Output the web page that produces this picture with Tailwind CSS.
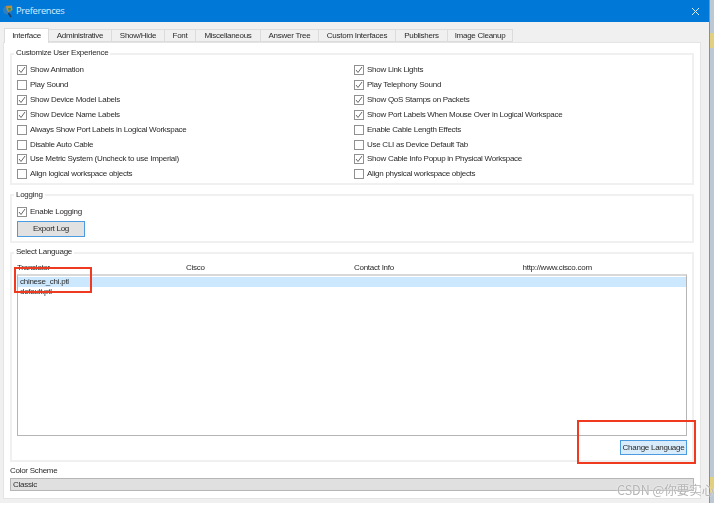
<!DOCTYPE html>
<html lang="en">
<head>
    <meta charset="UTF-8">
    <title>Preferences</title>
    <script src="https://cdn.jsdelivr.net/npm/@tailwindcss/browser@4"></script>
</head>
<body class="relative w-[714px] h-[505px] overflow-hidden bg-white font-['Liberation_Sans',sans-serif] text-[8px] tracking-[-0.27px] leading-none text-[#2a2a2a]">

  <div class="relative w-[714px] h-[505px] blur-[0.3px]">
    <div class="flex h-[503px]">
      <div class="w-[710px] h-[503px] bg-[#f0f0f0] border-r border-[#5b9bd5] flex flex-col">
        <!-- title bar -->
        <div class="h-[22px] bg-[#0078d7] flex items-center pl-[2px] pr-[8px] shrink-0">
            <svg width="12" height="14" viewBox="0 0 12 14">
                <circle cx="5.5" cy="6" r="4.5" fill="#2f7fc0"/>
                <path d="M4 2 L10 1.5 L10.5 6 L6 8 L4.5 5 Z" fill="#b98f3c"/>
                <path d="M6 4 L9 4 L8.5 6.5 L6.5 6.5 Z" fill="#3f8a4e"/>
                <path d="M6.5 9 L9 13" stroke="#1f3d5c" stroke-width="1.6"/>
            </svg>
            <span class="ml-[2px] text-[#d7ecff] text-[9.4px] tracking-[-0.35px] font-['Open_Sans',sans-serif]">Preferences</span>
            <svg class="ml-auto mr-[1px]" width="9" height="9" viewBox="0 0 9 9">
                <path d="M1 1 L8 8 M8 1 L1 8" stroke="#dcefff" stroke-width="1"/>
            </svg>
        </div>

        <div class="pl-[3px] pr-[8px] pt-[7px]">
            <!-- tabs -->
            <div class="flex h-[13px] items-stretch text-center whitespace-nowrap">
                <div class="w-[45px] ml-px -mt-px bg-white h-[15px] flex items-center justify-center border-t border-x border-[#dcdcdc] relative">Interface</div>
                <div class="w-[63px] border-y border-r border-[#dcdcdc] flex items-center justify-center">Administrative</div>
                <div class="w-[53px] border-y border-r border-[#dcdcdc] flex items-center justify-center">Show/Hide</div>
                <div class="w-[31px] border-y border-r border-[#dcdcdc] flex items-center justify-center">Font</div>
                <div class="w-[65px] border-y border-r border-[#dcdcdc] flex items-center justify-center">Miscellaneous</div>
                <div class="w-[58px] border-y border-r border-[#dcdcdc] flex items-center justify-center">Answer Tree</div>
                <div class="w-[77px] border-y border-r border-[#dcdcdc] flex items-center justify-center">Custom Interfaces</div>
                <div class="w-[52px] border-y border-r border-[#dcdcdc] flex items-center justify-center">Publishers</div>
                <div class="w-[65px] border-y border-r border-[#dcdcdc] flex items-center justify-center">Image Cleanup</div>
            </div>

            <!-- tab page -->
            <div class="h-[457px] bg-white border border-[#e4e4e4] px-[6px] pt-[10px] flex flex-col">

                <!-- customize group -->
                <div class="relative h-[132px] border-2 border-[#f0f0f0] pt-[8px] pl-[5px] grid grid-cols-[337px_1fr] auto-rows-[14.85px] shrink-0">
                    <span class="absolute left-[2px] top-[-6px] bg-white px-[2px]">Customize User Experience</span>

                    <label class="flex items-center"><svg class="mr-[3px]" width="10" height="10" viewBox="0 0 10 10"><rect x=".5" y=".5" width="9" height="9" fill="#fff" stroke="#909090"/><path d="M2 5 L4 7.5 L8 2" fill="none" stroke="#666"/></svg>Show Animation</label>
                    <label class="flex items-center"><svg class="mr-[3px]" width="10" height="10" viewBox="0 0 10 10"><rect x=".5" y=".5" width="9" height="9" fill="#fff" stroke="#909090"/><path d="M2 5 L4 7.5 L8 2" fill="none" stroke="#666"/></svg>Show Link Lights</label>

                    <label class="flex items-center"><svg class="mr-[3px]" width="10" height="10" viewBox="0 0 10 10"><rect x=".5" y=".5" width="9" height="9" fill="#fff" stroke="#909090"/></svg>Play Sound</label>
                    <label class="flex items-center"><svg class="mr-[3px]" width="10" height="10" viewBox="0 0 10 10"><rect x=".5" y=".5" width="9" height="9" fill="#fff" stroke="#909090"/><path d="M2 5 L4 7.5 L8 2" fill="none" stroke="#666"/></svg>Play Telephony Sound</label>

                    <label class="flex items-center"><svg class="mr-[3px]" width="10" height="10" viewBox="0 0 10 10"><rect x=".5" y=".5" width="9" height="9" fill="#fff" stroke="#909090"/><path d="M2 5 L4 7.5 L8 2" fill="none" stroke="#666"/></svg>Show Device Model Labels</label>
                    <label class="flex items-center"><svg class="mr-[3px]" width="10" height="10" viewBox="0 0 10 10"><rect x=".5" y=".5" width="9" height="9" fill="#fff" stroke="#909090"/><path d="M2 5 L4 7.5 L8 2" fill="none" stroke="#666"/></svg>Show QoS Stamps on Packets</label>

                    <label class="flex items-center"><svg class="mr-[3px]" width="10" height="10" viewBox="0 0 10 10"><rect x=".5" y=".5" width="9" height="9" fill="#fff" stroke="#909090"/><path d="M2 5 L4 7.5 L8 2" fill="none" stroke="#666"/></svg>Show Device Name Labels</label>
                    <label class="flex items-center"><svg class="mr-[3px]" width="10" height="10" viewBox="0 0 10 10"><rect x=".5" y=".5" width="9" height="9" fill="#fff" stroke="#909090"/><path d="M2 5 L4 7.5 L8 2" fill="none" stroke="#666"/></svg>Show Port Labels When Mouse Over in Logical Workspace</label>

                    <label class="flex items-center"><svg class="mr-[3px]" width="10" height="10" viewBox="0 0 10 10"><rect x=".5" y=".5" width="9" height="9" fill="#fff" stroke="#909090"/></svg>Always Show Port Labels in Logical Workspace</label>
                    <label class="flex items-center"><svg class="mr-[3px]" width="10" height="10" viewBox="0 0 10 10"><rect x=".5" y=".5" width="9" height="9" fill="#fff" stroke="#909090"/></svg>Enable Cable Length Effects</label>

                    <label class="flex items-center"><svg class="mr-[3px]" width="10" height="10" viewBox="0 0 10 10"><rect x=".5" y=".5" width="9" height="9" fill="#fff" stroke="#909090"/></svg>Disable Auto Cable</label>
                    <label class="flex items-center"><svg class="mr-[3px]" width="10" height="10" viewBox="0 0 10 10"><rect x=".5" y=".5" width="9" height="9" fill="#fff" stroke="#909090"/></svg>Use CLI as Device Default Tab</label>

                    <label class="flex items-center"><svg class="mr-[3px]" width="10" height="10" viewBox="0 0 10 10"><rect x=".5" y=".5" width="9" height="9" fill="#fff" stroke="#909090"/><path d="M2 5 L4 7.5 L8 2" fill="none" stroke="#666"/></svg>Use Metric System (Uncheck to use Imperial)</label>
                    <label class="flex items-center"><svg class="mr-[3px]" width="10" height="10" viewBox="0 0 10 10"><rect x=".5" y=".5" width="9" height="9" fill="#fff" stroke="#909090"/><path d="M2 5 L4 7.5 L8 2" fill="none" stroke="#666"/></svg>Show Cable Info Popup in Physical Workspace</label>

                    <label class="flex items-center"><svg class="mr-[3px]" width="10" height="10" viewBox="0 0 10 10"><rect x=".5" y=".5" width="9" height="9" fill="#fff" stroke="#909090"/></svg>Align logical workspace objects</label>
                    <label class="flex items-center"><svg class="mr-[3px]" width="10" height="10" viewBox="0 0 10 10"><rect x=".5" y=".5" width="9" height="9" fill="#fff" stroke="#909090"/></svg>Align physical workspace objects</label>
                </div>

                <!-- logging group -->
                <div class="relative h-[49px] mt-[9px] border-2 border-[#f0f0f0] pt-[11px] pl-[5px] shrink-0">
                    <span class="absolute left-[2px] top-[-5px] bg-white px-[2px]">Logging</span>
                    <label class="flex items-center"><svg class="mr-[3px]" width="10" height="10" viewBox="0 0 10 10"><rect x=".5" y=".5" width="9" height="9" fill="#fff" stroke="#909090"/><path d="M2 5 L4 7.5 L8 2" fill="none" stroke="#666"/></svg>Enable Logging</label>
                    <button class="block mt-[4px] w-[68px] h-[16px] bg-[#e1e1e1] border border-[#4a9be0] text-center">Export Log</button>
                </div>

                <!-- language group -->
                <div class="relative h-[210px] mt-[9px] border-2 border-[#f0f0f0] px-[5px] pt-[8px] flex flex-col shrink-0">
                    <span class="absolute left-[2px] top-[-6px] bg-white px-[2px]">Select Language</span>
                    <div class="grid grid-cols-[169px_168px_168.5px_1fr] h-[12px] items-center">
                        <span>Translator</span>
                        <span>Cisco</span>
                        <span>Contact Info</span>
                        <span>http://www.cisco.com</span>
                    </div>
                    <div class="h-[162px] border border-[#b5b5b5] border-t-2 border-t-[#d8d8d8] pt-px">
                        <div class="h-[10px] bg-[#cce8ff] pl-[2px] flex items-center">chinese_chi.ptl</div>
                        <div class="h-[10px] pl-[2px] flex items-center">default.ptl</div>
                    </div>
                    <div class="flex justify-end mt-[4px]">
                        <button class="w-[67px] h-[15px] bg-[#d9ecfb] border border-[#4a9be0] text-center whitespace-nowrap">Change Language</button>
                    </div>
                </div>

                <!-- colour scheme -->
                <div class="mt-[3px] h-[11px] flex items-center">Color Scheme</div>
                <div class="mt-[2px] h-[13px] bg-[#e0e0e0] border border-[#b5b5b5] flex items-center pl-[2px]">Classic</div>
            </div>
        </div>
      </div>

      <!-- edge of the window behind -->
      <div class="w-[4px] bg-[#bcc8d4] pt-[33px] flex flex-col">
        <div class="h-[15px] bg-[#e3cf80]"></div>
        <div class="h-[429px]"></div>
        <div class="h-[16px] bg-[#e3cf80]"></div>
      </div>
    </div>

    <!-- red annotation boxes drawn over the screenshot -->
    <div class="absolute left-[14px] top-[267px] w-[78px] h-[26px] border-2 border-[#f03a20]"></div>
    <div class="absolute left-[577px] top-[420px] w-[119px] h-[44px] border-2 border-[#f03a20]"></div>

    <!-- watermark -->
    <div class="absolute left-[617px] top-[484px] text-[12.5px] tracking-normal whitespace-nowrap text-[#b4b4b4] font-['Noto_Sans_CJK_SC',sans-serif] [text-shadow:0_0_2px_#fff]">CSDN @你要实心</div>
  </div>
</body>
</html>
